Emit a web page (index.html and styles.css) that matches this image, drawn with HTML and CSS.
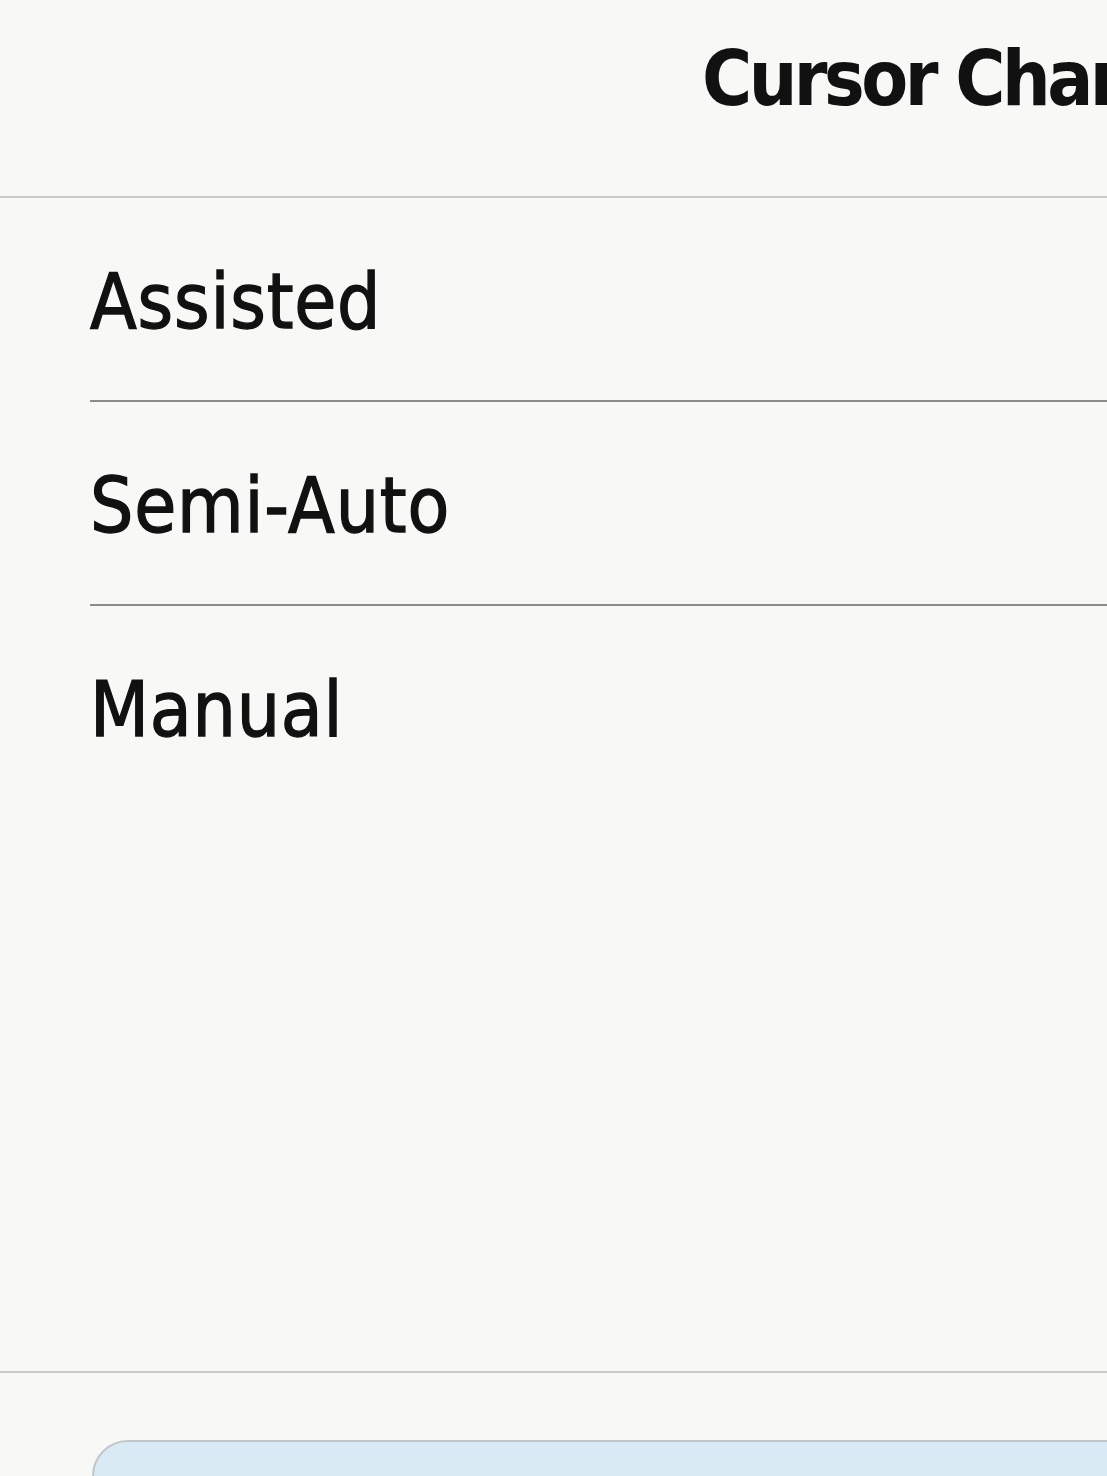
FILE: index.html
```html
<!DOCTYPE html>
<html lang="en">
<head>
    <meta charset="UTF-8">
    <meta name="viewport" content="width=device-width, initial-scale=1.0">
    <title>Cursor Change</title>
    <link rel="stylesheet" href="styles.css">
</head>
<body>
    <div class="screen">
        <header class="title-bar">
            <h1>Cursor Change</h1>
        </header>

        <ul class="options">
            <li class="option">Assisted</li>
            <li class="option">Semi-Auto</li>
            <li class="option">Manual</li>
        </ul>

        <footer class="actions">
            <button class="btn-confirm" type="button"></button>
        </footer>
    </div>
</body>
</html>
```

FILE: styles.css
```css
html, body {
    margin: 0;
    padding: 0;
}
body {
    font-family: 'DejaVu Sans Condensed', 'DejaVu Sans', sans-serif;
    background-color: #f8f8f6;
    color: #111;
}
.screen {
    width: 1107px;
    height: 1476px;
    display: flex;
    flex-direction: column;
    overflow: hidden;
}
.title-bar {
    height: 198px;
    border-bottom: 2px solid #c9c9c7;
    box-sizing: border-box;
    flex-shrink: 0;
    overflow: hidden;
}
.title-bar h1 {
    margin: 0;
    padding: 41px 0 0 702px;
    font-size: 76px;
    line-height: 76px;
    font-weight: bold;
    letter-spacing: -3.5px;
    white-space: nowrap;
}
.options {
    list-style: none;
    margin: 0;
    padding: 0 0 0 90px;
    flex: 1;
}
.option {
    height: 196px;
    padding-top: 6px;
    display: flex;
    align-items: center;
    font-size: 76px;
    line-height: 76px;
    letter-spacing: 0.8px;
    -webkit-text-stroke: 1.3px #111;
    border-bottom: 2px solid #8c8c8c;
}
.option:last-child {
    border-bottom: none;
}
.actions {
    height: 105px;
    box-sizing: border-box;
    border-top: 2px solid #c9c9c7;
    padding: 67px 0 0 92px;
    flex-shrink: 0;
}
.btn-confirm {
    display: block;
    width: 1100px;
    height: 120px;
    background-color: #d9eaf5;
    border: 2px solid #c3c6c8;
    border-radius: 36px;
}
```
